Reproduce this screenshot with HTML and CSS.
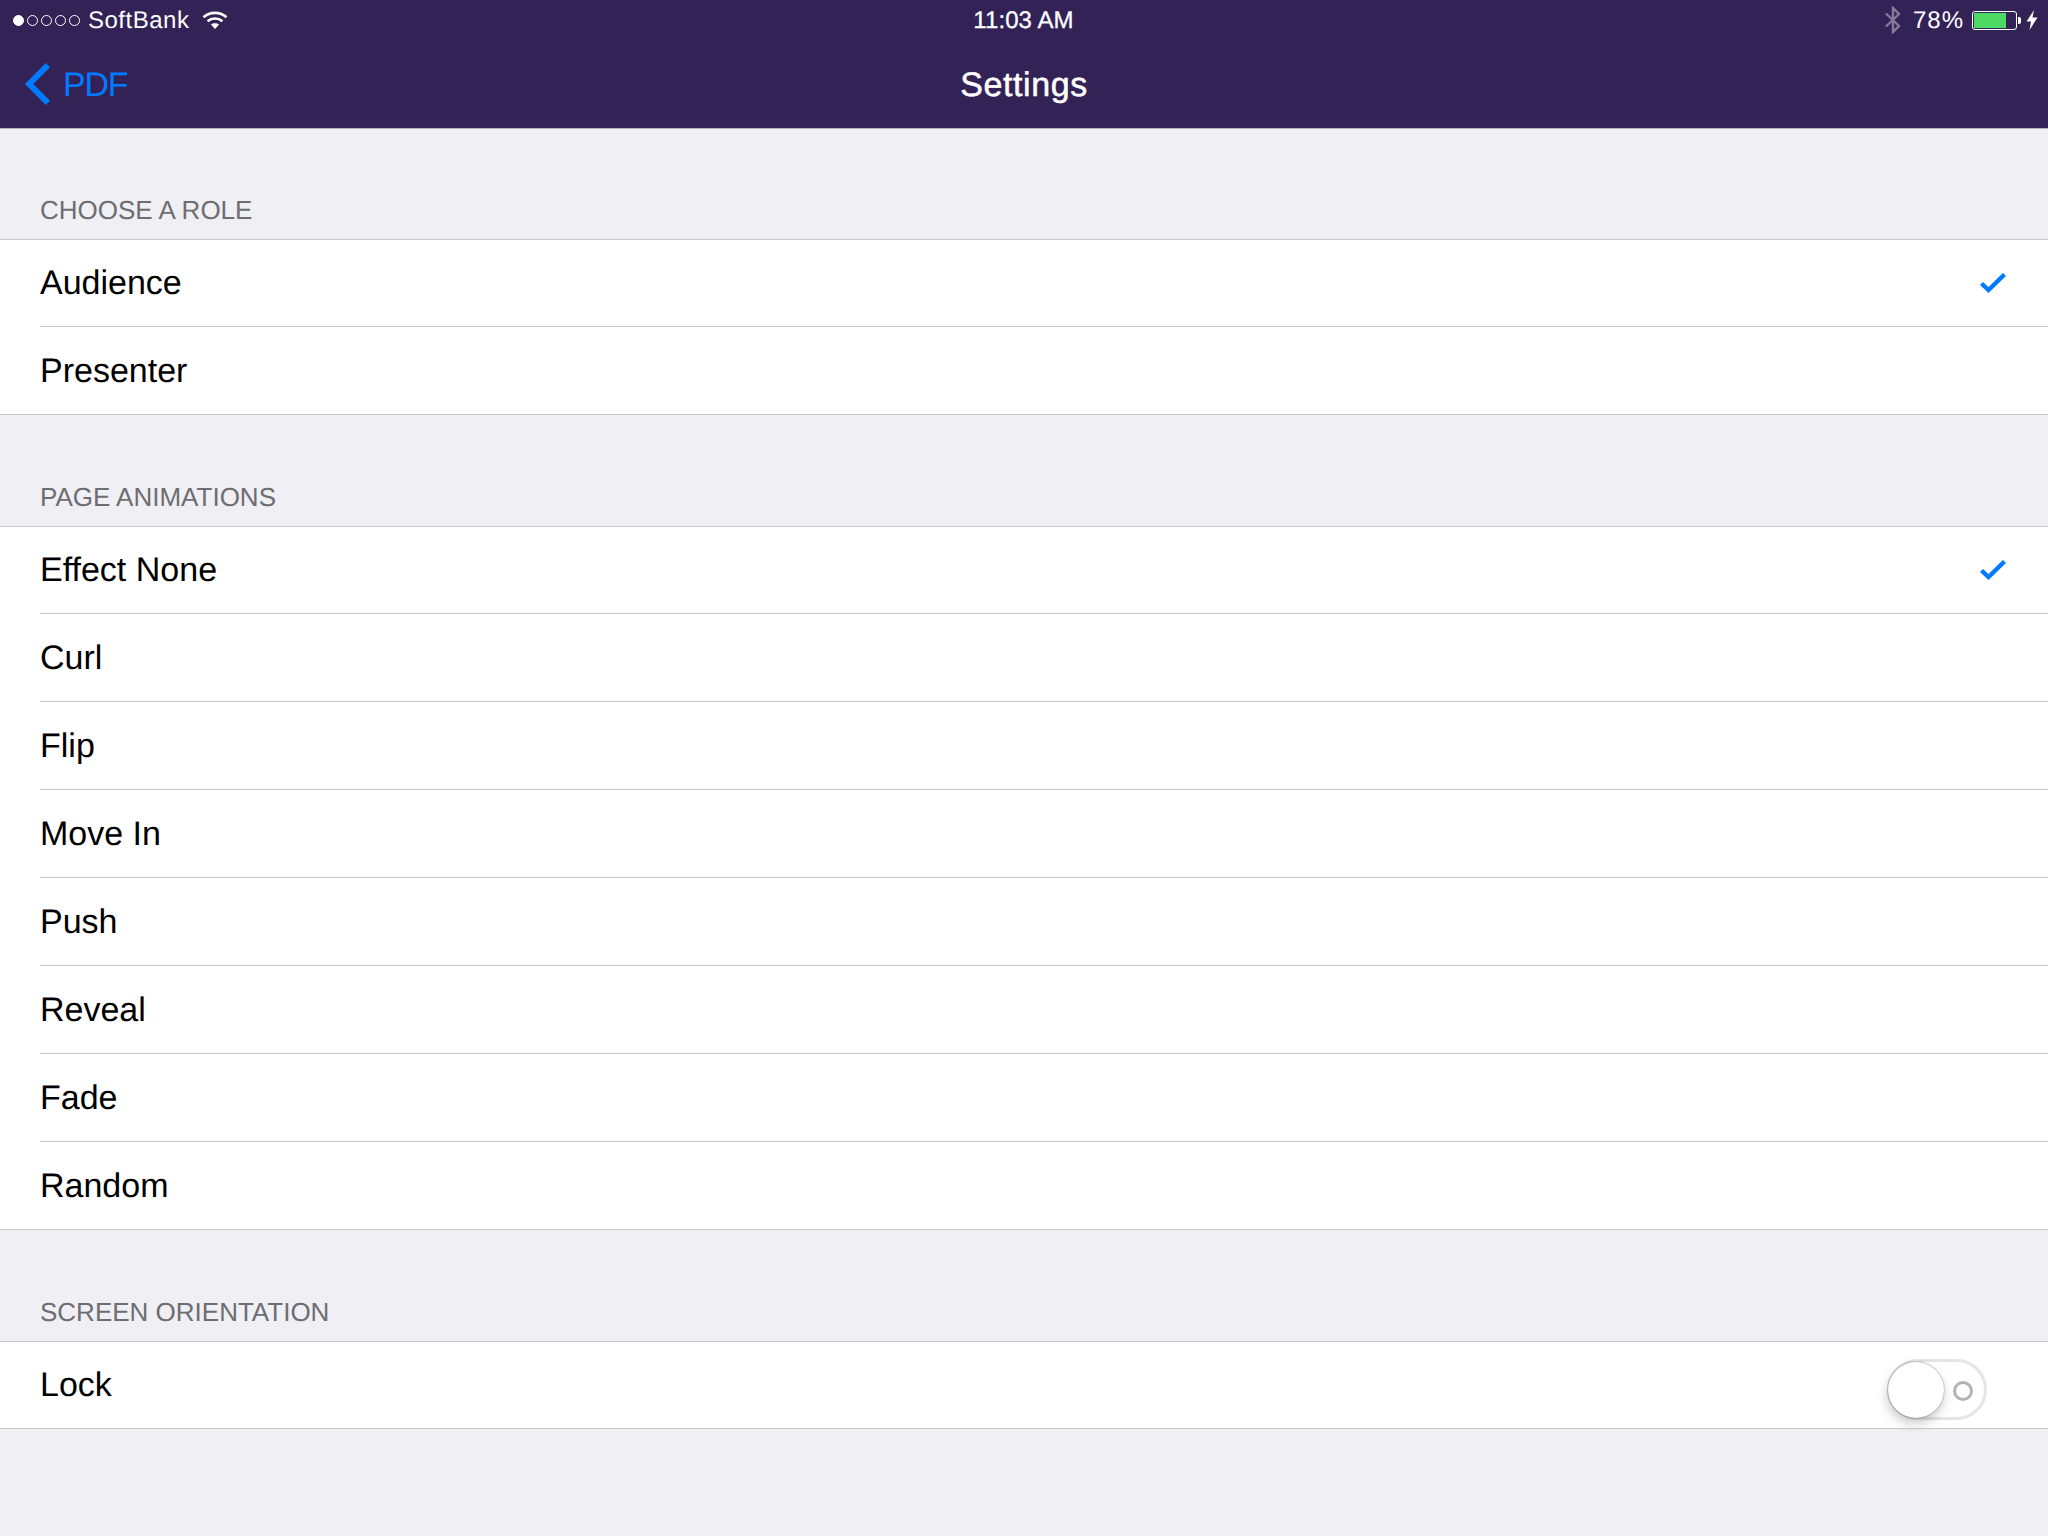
FILE: index.html
```html
<!DOCTYPE html>
<html lang="en">
<head>
<meta charset="utf-8">
<title>Settings</title>
<link rel="stylesheet" href="styles.css">
</head>
<body>
<header class="topbar">
  <div class="status">
    <div class="status-left">
      <span class="signal"><i class="dot full"></i><i class="dot"></i><i class="dot"></i><i class="dot"></i><i class="dot"></i></span>
      <span class="carrier">SoftBank</span>
      <svg class="wifi" width="26" height="20" viewBox="0 0 26 20"><path d="M1.5 7.2C7.8 1.4 18.2 1.4 24.5 7.2" fill="none" stroke="#fff" stroke-width="2.7"/><path d="M5.6 11.2C9.7 7.6 16.3 7.6 20.4 11.2" fill="none" stroke="#fff" stroke-width="2.7"/><path d="M13 19L8.9 14.6C11.2 12.7 14.8 12.7 17.1 14.6Z" fill="#fff"/></svg>
    </div>
    <div class="time">11:03 AM</div>
    <div class="status-right">
      <svg class="bt" width="16" height="28" viewBox="0 0 16 28"><path d="M1 7.5L14 20L8 26V2L14 8L1 20.5" fill="none" stroke="#85799a" stroke-width="2.4"/></svg>
      <span class="percent">78%</span>
      <span class="battery"><span class="battery-fill"></span></span><span class="battery-nub"></span>
      <svg class="bolt" width="12" height="20" viewBox="0 0 12 20"><path d="M8 0L0.5 11.5H5L3.5 20L11.5 7.5H6.5Z" fill="#fff"/></svg>
    </div>
  </div>
  <nav class="nav">
    <a class="back">
      <svg class="chev" width="26" height="42" viewBox="0 0 26 42"><path d="M23.9 2.1L5.2 21L23.9 39.9" fill="none" stroke="#007aff" stroke-width="6"/></svg>
      <span class="back-label">PDF</span>
    </a>
    <h1 class="title">Settings</h1>
    <span class="nav-end"></span>
  </nav>
</header>
<main>
  <section class="group">
    <h2 class="group-head">CHOOSE A ROLE</h2>
    <ul class="rows">
      <li class="row"><span class="cell">Audience</span><svg class="check" width="26" height="20" viewBox="0 0 26 20"><path d="M1.5 10.5L8.5 17L24.5 1.5" fill="none" stroke="#007aff" stroke-width="4.4"/></svg></li>
      <li class="row"><span class="cell">Presenter</span></li>
    </ul>
  </section>
  <section class="group">
    <h2 class="group-head">PAGE ANIMATIONS</h2>
    <ul class="rows">
      <li class="row"><span class="cell">Effect None</span><svg class="check" width="26" height="20" viewBox="0 0 26 20"><path d="M1.5 10.5L8.5 17L24.5 1.5" fill="none" stroke="#007aff" stroke-width="4.4"/></svg></li>
      <li class="row"><span class="cell">Curl</span></li>
      <li class="row"><span class="cell">Flip</span></li>
      <li class="row"><span class="cell">Move In</span></li>
      <li class="row"><span class="cell">Push</span></li>
      <li class="row"><span class="cell">Reveal</span></li>
      <li class="row"><span class="cell">Fade</span></li>
      <li class="row"><span class="cell">Random</span></li>
    </ul>
  </section>
  <section class="group">
    <h2 class="group-head">SCREEN ORIENTATION</h2>
    <ul class="rows">
      <li class="row"><span class="cell">Lock</span>
        <span class="switch"><span class="switch-ring"></span><span class="switch-knob"></span></span>
      </li>
    </ul>
  </section>
</main>
</body>
</html>
```
FILE: styles.css
```css
* { box-sizing: border-box; }
html, body { margin: 0; height: 1536px; overflow: hidden; }
body { background: #efeff4; font-family: "Liberation Sans", Arial, sans-serif; color: #000; text-rendering: geometricPrecision; }
.topbar { background: #332255; height: 129px; border-bottom: 1px solid #b2b2b2; color: #fff; }
.status { height: 40px; display: grid; grid-template-columns: 1fr auto 1fr; align-items: center; padding: 0 10px 0 13px; font-size: 24px; }
.status-left { display: flex; align-items: center; }
.signal { display: flex; gap: 3px; margin-right: 8px; }
.dot { width: 11px; height: 11px; border-radius: 50%; border: 1px solid #fff; }
.dot.full { background: #fff; }
.carrier { margin-right: 13px; padding-top: 2px; letter-spacing: .5px; }
.wifi { display: block; }
.time { font-size: 24px; margin-right: 4px; padding-top: 2px; -webkit-text-stroke: .3px #fff; letter-spacing: .1px; }
.status-right { display: flex; align-items: center; justify-content: flex-end; }
.bt { margin-right: 12px; }
.percent { margin-right: 8px; padding-top: 2px; letter-spacing: 1px; }
.battery { width: 45px; height: 19px; border: 1px solid #fff; border-radius: 3px; padding: 1px; display: block; }
.battery-fill { display: block; width: 32px; height: 100%; background: #4cd964; }
.battery-nub { width: 3px; height: 7px; background: #fff; border-radius: 0 2px 2px 0; margin-left: 1px; margin-right: 5px; }
.nav { height: 88px; display: grid; grid-template-columns: 1fr auto 1fr; align-items: center; }
.back { display: flex; align-items: center; gap: 13px; padding-left: 24px; color: #007aff; font-size: 34px; letter-spacing: -1.2px; }
.back-label { padding-top: 2px; }
.chev { display: block; }
.title { margin: 0; padding-top: 2px; font-size: 34px; font-weight: 400; -webkit-text-stroke: 0.5px #fff; letter-spacing: .6px; }
.group-head { margin: 0; height: 111px; padding-bottom: 13px; display: flex; align-items: flex-end; padding-left: 40px; font-size: 26px; font-weight: 400; color: #6d6d72; }
.group:first-child .group-head { height: 110px; }
.rows { margin: 0; padding: 0 0 0 40px; list-style: none; background: #fff; border-top: 1px solid #c8c7cc; border-bottom: 1px solid #c8c7cc; }
.row { height: 88px; display: flex; align-items: center; justify-content: space-between; padding-right: 42px; border-bottom: 1px solid #c8c7cc; font-size: 34px; }
.row:first-child { height: 87px; }
.row:last-child { border-bottom: 0; height: 87px; }
.row:only-child { height: 86px; }
.cell { display: block; padding-top: 1px; }
.check { display: block; }
.switch { position: relative; display: block; width: 100px; height: 61px; margin: 9px 19px 0 0; border: 3px solid #e5e5e5; border-radius: 31px; background: #fff; }
.switch-ring { position: absolute; left: 63px; top: 19px; width: 20px; height: 20px; border: 3px solid #b3b3b3; border-radius: 50%; }
.switch-knob { position: absolute; left: -2px; top: 0; width: 56px; height: 56px; border-radius: 50%; background: #fff; box-shadow: -1px 6px 12px rgba(0,0,0,.2), 0 0 2px rgba(0,0,0,.5); }
```
